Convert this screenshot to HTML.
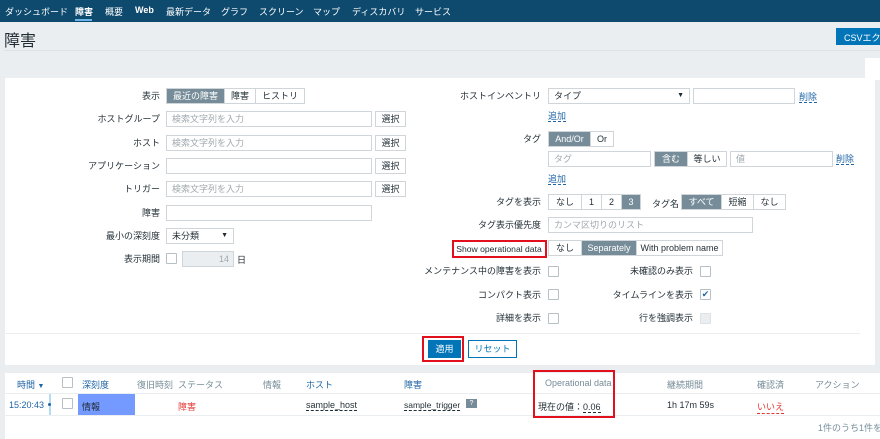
<!DOCTYPE html>
<html><head><meta charset="utf-8"><style>
*{box-sizing:border-box;margin:0;padding:0}
body{width:880px;height:439px;overflow:hidden;background:#ebeef0;font-family:"Liberation Sans","Noto Sans CJK JP",sans-serif;font-size:9px;color:#1f2c33;position:relative}
.a{position:absolute;white-space:nowrap}
.nav{position:absolute;left:0;top:0;width:880px;height:22px;background:#0e4a6e}
.nav span{position:absolute;top:5px;color:#fff;font-size:9px}
.lbl{position:absolute;text-align:right;width:200px;line-height:16px}
.in{position:absolute;height:16px;border:1px solid #cfd5d9;background:#fff;color:#a0a9ae;padding-left:5px;line-height:14px}
.btn{position:absolute;height:16px;border:1px solid #cfd5d9;background:#fff;text-align:center;line-height:14px}
.seg{position:absolute;height:16px;display:flex;border:1px solid #cfd5d9;background:#fff}
.seg div{border-right:1px solid #cfd5d9;text-align:center;line-height:14px}
.seg div:last-child{border-right:0}
.seg .on{background:#768d99;color:#fff}
.cb{position:absolute;width:11px;height:11px;border:1px solid #b6c0c5;background:#fff;border-radius:1px}
.lnk{color:#1f65a6;border-bottom:1px dashed #1f65a6}
.red{position:absolute;border:2px solid #e2101c}
.th{position:absolute;top:378px;color:#768d99}
.td{position:absolute;top:400px}
</style></head><body>
<div class="nav">
<span style="left:5px">ダッシュボード</span>
<span style="left:75px;font-weight:bold">障害</span>
<div class="a" style="left:75px;top:19px;width:17px;height:2px;background:#6ab4e8"></div>
<span style="left:105px">概要</span>
<span style="left:135px;font-weight:bold">Web</span>
<span style="left:166px">最新データ</span>
<span style="left:221px">グラフ</span>
<span style="left:259px">スクリーン</span>
<span style="left:313px">マップ</span>
<span style="left:352px">ディスカバリ</span>
<span style="left:415px">サービス</span>
</div>
<div class="a" style="left:4px;top:27px;font-size:16px">障害</div>
<div class="a" style="left:4px;top:50px;width:876px;height:1px;background:#dde2e5"></div>
<div class="a" style="left:836px;top:28px;width:50px;height:17px;background:#0275b8;color:#fff;padding:3px 0 0 8px">CSVエクスポート</div>
<div class="a" style="left:865px;top:58px;width:20px;height:22px;background:#fff"></div>

<div class="a" style="left:5px;top:78px;width:870px;height:287px;background:#fff"></div>

<!-- left column -->
<div class="lbl" style="left:-40px;top:88px">表示</div>
<div class="seg" style="left:166px;top:88px;width:139px"><div class="on" style="width:58px">最近の障害</div><div style="width:31px">障害</div><div style="flex:1">ヒストリ</div></div>
<div class="lbl" style="left:-40px;top:111px">ホストグループ</div>
<div class="in" style="left:166px;top:111px;width:206px">検索文字列を入力</div>
<div class="btn" style="left:375px;top:111px;width:31px">選択</div>
<div class="lbl" style="left:-40px;top:135px">ホスト</div>
<div class="in" style="left:166px;top:135px;width:206px">検索文字列を入力</div>
<div class="btn" style="left:375px;top:135px;width:31px">選択</div>
<div class="lbl" style="left:-40px;top:158px">アプリケーション</div>
<div class="in" style="left:166px;top:158px;width:206px"></div>
<div class="btn" style="left:375px;top:158px;width:31px">選択</div>
<div class="lbl" style="left:-40px;top:181px">トリガー</div>
<div class="in" style="left:166px;top:181px;width:206px">検索文字列を入力</div>
<div class="btn" style="left:375px;top:181px;width:31px">選択</div>
<div class="lbl" style="left:-40px;top:205px">障害</div>
<div class="in" style="left:166px;top:205px;width:206px"></div>
<div class="lbl" style="left:-40px;top:228px">最小の深刻度</div>
<div class="in" style="left:166px;top:228px;width:68px;color:#1f2c33">未分類<span style="position:absolute;right:5px;font-size:7px">▼</span></div>
<div class="lbl" style="left:-40px;top:251px">表示期間</div>
<div class="cb" style="left:166px;top:253px"></div>
<div class="in" style="left:182px;top:251px;width:52px;background:#ebeef0;text-align:right;padding-right:4px">14</div>
<div class="a" style="left:237px;top:253px">日</div>

<!-- right column -->
<div class="lbl" style="left:341px;top:88px">ホストインベントリ</div>
<div class="in" style="left:548px;top:88px;width:142px;color:#1f2c33">タイプ<span style="position:absolute;right:5px;font-size:7px">▼</span></div>
<div class="in" style="left:693px;top:88px;width:102px"></div>
<div class="a" style="left:799px;top:90px"><span class="lnk">削除</span></div>
<div class="a" style="left:548px;top:109px"><span class="lnk">追加</span></div>
<div class="lbl" style="left:341px;top:131px">タグ</div>
<div class="seg" style="left:548px;top:131px;width:66px"><div class="on" style="width:42px">And/Or</div><div style="flex:1">Or</div></div>
<div class="in" style="left:548px;top:151px;width:103px">タグ</div>
<div class="seg" style="left:654px;top:151px;width:73px"><div class="on" style="width:33px">含む</div><div style="flex:1">等しい</div></div>
<div class="in" style="left:730px;top:151px;width:103px">値</div>
<div class="a" style="left:836px;top:152px"><span class="lnk">削除</span></div>
<div class="a" style="left:548px;top:172px"><span class="lnk">追加</span></div>
<div class="lbl" style="left:341px;top:194px">タグを表示</div>
<div class="seg" style="left:548px;top:194px;width:93px"><div style="width:33px">なし</div><div style="width:20px">1</div><div style="width:20px">2</div><div class="on" style="flex:1">3</div></div>
<div class="a" style="left:652px;top:197px">タグ名</div>
<div class="seg" style="left:681px;top:194px;width:105px"><div class="on" style="width:40px">すべて</div><div style="width:32px">短縮</div><div style="flex:1">なし</div></div>
<div class="lbl" style="left:341px;top:217px">タグ表示優先度</div>
<div class="in" style="left:548px;top:217px;width:205px">カンマ区切りのリスト</div>
<div class="a" style="left:455px;top:244px;width:88px;text-align:center;font-size:8.6px;line-height:11px">Show operational data</div>
<div class="red" style="left:452px;top:240px;width:95px;height:18px"></div>
<div class="seg" style="left:548px;top:240px;width:175px"><div style="width:33px">なし</div><div class="on" style="width:55px">Separately</div><div style="flex:1">With problem name</div></div>
<div class="lbl" style="left:341px;top:263px">メンテナンス中の障害を表示</div>
<div class="cb" style="left:548px;top:266px"></div>
<div class="lbl" style="left:493px;top:263px">未確認のみ表示</div>
<div class="cb" style="left:700px;top:266px"></div>
<div class="lbl" style="left:341px;top:287px">コンパクト表示</div>
<div class="cb" style="left:548px;top:289px"></div>
<div class="lbl" style="left:493px;top:287px">タイムラインを表示</div>
<div class="cb" style="left:700px;top:289px;color:#1f65a6;font-size:9px;line-height:9px;text-align:center">✔</div>
<div class="lbl" style="left:341px;top:310px">詳細を表示</div>
<div class="cb" style="left:548px;top:313px"></div>
<div class="lbl" style="left:493px;top:310px">行を強調表示</div>
<div class="cb" style="left:700px;top:313px;background:#ebeef0;border-color:#dde2e5"></div>

<div class="a" style="left:5px;top:333px;width:855px;height:1px;background:#ebeef0"></div>
<div class="red" style="left:422px;top:336px;width:42px;height:26px"></div>
<div class="a" style="left:428px;top:340px;width:33px;height:18px;background:#0275b8;color:#fff;text-align:center;line-height:18px">適用</div>
<div class="a" style="left:468px;top:340px;width:49px;height:18px;border:1px solid #0275b8;color:#0275b8;background:#fff;text-align:center;line-height:16px">リセット</div>

<!-- table -->
<div class="a" style="left:5px;top:373px;width:875px;height:66px;background:#fff"></div>
<div class="a" style="left:5px;top:393px;width:875px;height:1px;background:#ebeef0"></div>
<div class="a" style="left:5px;top:415px;width:875px;height:1px;background:#ebeef0"></div>
<div class="th" style="left:17px;color:#1f65a6">時間 <span style="font-size:7px">▼</span></div>
<div class="cb" style="left:62px;top:377px"></div>
<div class="th" style="left:82px;color:#1f65a6">深刻度</div>
<div class="th" style="left:137px">復旧時刻</div>
<div class="th" style="left:178px">ステータス</div>
<div class="th" style="left:263px">情報</div>
<div class="th" style="left:306px;color:#1f65a6">ホスト</div>
<div class="th" style="left:404px;color:#1f65a6">障害</div>
<div class="th" style="left:545px">Operational data</div>
<div class="th" style="left:667px">継続期間</div>
<div class="th" style="left:757px">確認済</div>
<div class="th" style="left:815px">アクション</div>
<div class="td" style="left:9px;color:#1f65a6">15:20:43</div>
<div class="a" style="left:49px;top:394px;width:2px;height:21px;background:#b6dcf2"></div>
<div class="a" style="left:48px;top:403px;width:3px;height:3px;background:#1f65a6;border-radius:2px"></div>
<div class="cb" style="left:62px;top:398px"></div>
<div class="a" style="left:78px;top:394px;width:57px;height:21px;background:#7499ff;padding:6px 0 0 4px">情報</div>
<div class="td" style="left:178px;color:#e33734">障害</div>
<div class="td" style="left:306px;border-bottom:1px dashed #1f2c33">sample_host</div>
<div class="td" style="left:404px;border-bottom:1px dashed #1f2c33;font-size:8.5px">sample_trigger</div>
<div class="a" style="left:466px;top:399px;width:11px;height:9px;background:#768d99;color:#fff;font-size:7px;text-align:center;line-height:9px">?</div>
<div class="td" style="left:538px">現在の値：<span style="border-bottom:1px dashed #1f2c33">0.06</span></div>
<div class="red" style="left:533px;top:370px;width:82px;height:48px"></div>
<div class="td" style="left:667px">1h 17m 59s</div>
<div class="td" style="left:757px;color:#e33734;border-bottom:1px dashed #e33734">いいえ</div>
<div class="a" style="left:818px;top:421px;color:#768d99">1件のうち1件を表示</div>
</body></html>
